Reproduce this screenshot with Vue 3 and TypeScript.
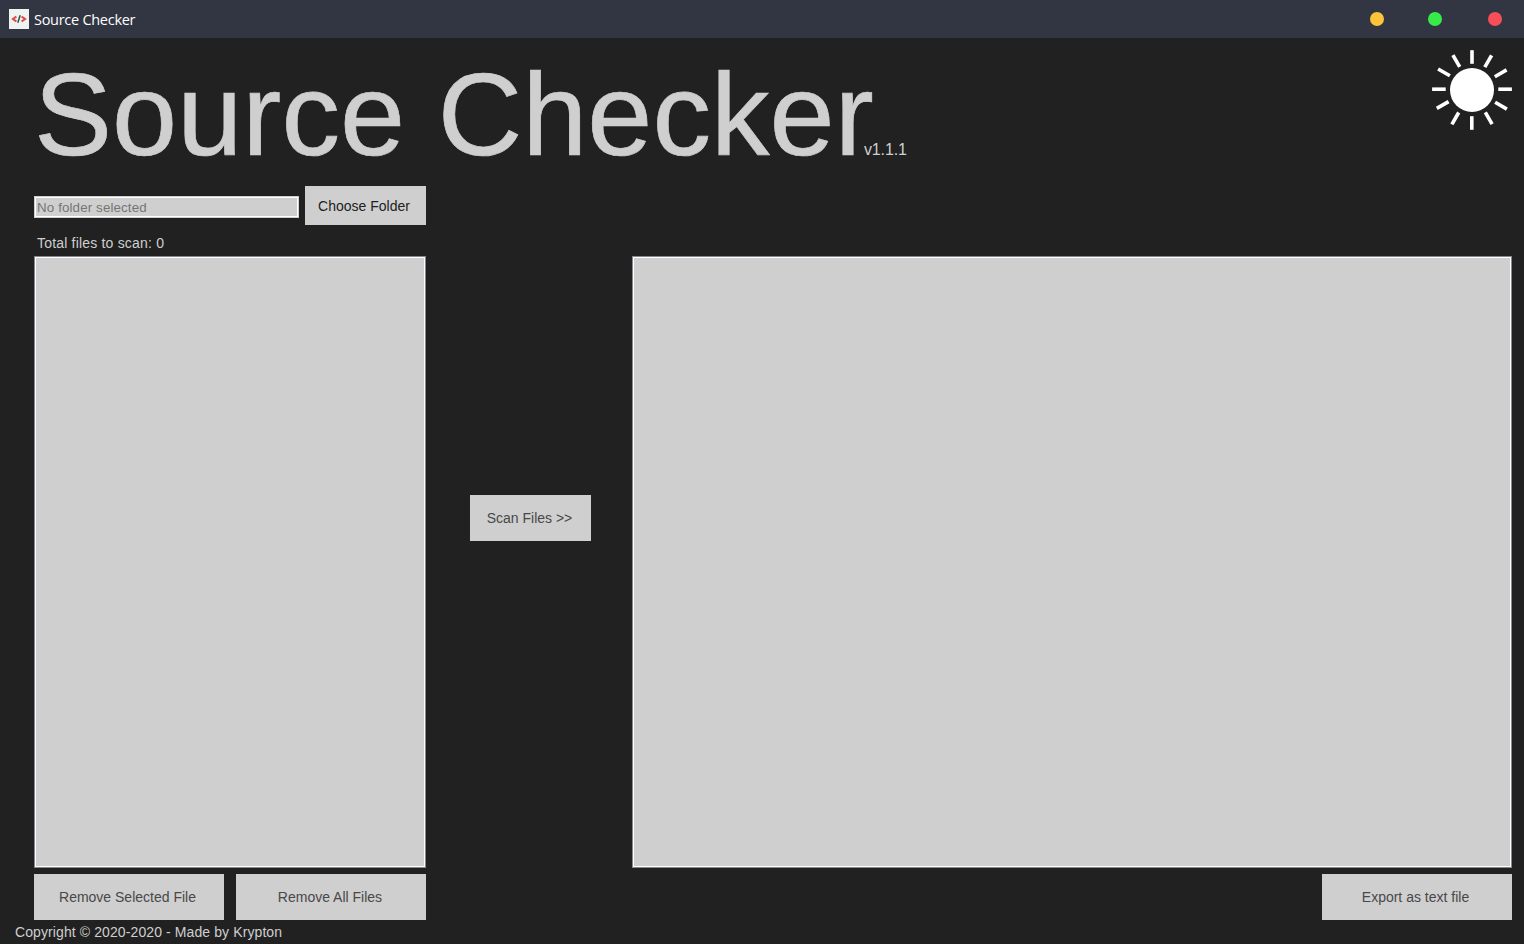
<script setup lang="ts">
import { ref } from 'vue'

interface Ray {
  angle: number
  x: number
  y: number
}

const folder = ref<string>('')
const totalFiles = ref<number>(0)

// Centre of each ray relative to the sun's disc.
const rays: Ray[] = [
  { angle: 0, x: 0, y: -33 },
  { angle: 30, x: 16.2, y: -28.8 },
  { angle: 60, x: 28.7, y: -16.7 },
  { angle: 90, x: 33.1, y: -0.8 },
  { angle: 120, x: 29, y: 15.7 },
  { angle: 150, x: 16.7, y: 28.3 },
  { angle: 180, x: -0.2, y: 33 },
  { angle: 210, x: -16.7, y: 28.4 },
  { angle: 240, x: -29.3, y: 15 },
  { angle: 270, x: -33.1, y: -0.8 },
  { angle: 300, x: -28, y: -17.6 },
  { angle: 330, x: -15.7, y: -29 },
]
</script>

<template>
  <div class="window">
    <header class="titlebar">
      <svg class="logo" width="20" height="20" viewBox="0 0 20 20">
        <rect width="20" height="20" fill="#eef2f1" />
        <path d="M7.4 7.5 4 10l3.4 2.5M12.6 7.5 16 10l-3.4 2.5" fill="none" stroke="#dc4a48" stroke-width="2.1" />
        <path d="M11.2 6.3 8.8 13.7" stroke="#344e56" stroke-width="1.5" />
      </svg>
      <span class="caption">Source Checker</span>
      <nav class="controls">
        <i class="dot minimize"></i>
        <i class="dot maximize"></i>
        <i class="dot close"></i>
      </nav>
    </header>

    <main class="content">
      <section class="masthead">
        <h1>Source Checker</h1>
        <span class="version">v1.1.1</span>
        <svg class="sun" width="80" height="80" viewBox="-40 -40 80 80">
          <circle cx="0" cy="0" r="22" fill="#fff" />
          <rect
            v-for="ray in rays"
            :key="ray.angle"
            x="-1.8"
            y="-6.8"
            width="3.6"
            height="13.6"
            fill="#fff"
            :transform="`translate(${ray.x} ${ray.y}) rotate(${ray.angle})`"
          />
        </svg>
      </section>

      <section class="picker">
        <input v-model="folder" class="path" type="text" placeholder="No folder selected" readonly />
        <button class="choose">Choose Folder</button>
      </section>
      <p class="total">Total files to scan: {{ totalFiles }}</p>

      <section class="panels">
        <div class="list"></div>
        <button class="scan">Scan Files &gt;&gt;</button>
        <div class="list"></div>
      </section>

      <section class="actions">
        <button class="remove">Remove Selected File</button>
        <button class="remove-all">Remove All Files</button>
        <button class="export">Export as text file</button>
      </section>
      <footer>Copyright © 2020-2020 - Made by Krypton</footer>
    </main>
  </div>
</template>

<style>
html,
body {
  background: #212121;
  overflow: hidden;
}
</style>

<style scoped>
.window {
  box-sizing: border-box;
  width: 1524px;
  height: 944px;
  overflow: hidden;
  background: #212121;
  color: #cfcfcf;
  font: 14px/16px 'Liberation Sans', Arial, sans-serif;
}
.titlebar {
  display: flex;
  align-items: center;
  box-sizing: border-box;
  height: 38px;
  padding: 0 22px 0 9px;
  background: #313642;
}
.logo {
  display: block;
}
.caption {
  margin: 1px 0 0 5px;
  color: #fff;
  font: 14.5px/20px 'Open Sans', 'Noto Sans', sans-serif;
  letter-spacing: -0.28px;
  white-space: nowrap;
}
.controls {
  display: flex;
  margin-left: auto;
}
.dot {
  width: 14px;
  height: 14px;
  border-radius: 50%;
}
.minimize {
  background: #fcc438;
}
.maximize {
  margin-left: 44px;
  background: #38ea49;
}
.close {
  margin-left: 46px;
  background: #f84e57;
}
.content {
  padding: 0 12px 0 34px;
}
.masthead {
  display: flex;
  height: 148px;
}
h1 {
  width: 839px;
  margin: 10px 0 0;
  font-size: 117px;
  font-weight: 400;
  line-height: 134px;
  letter-spacing: 0.06px;
  white-space: nowrap;
  -webkit-text-stroke: 0.7px #cfcfcf;
}
.version {
  margin: 103px 0 0 -9px;
  font-size: 16px;
  line-height: 18px;
  letter-spacing: -0.15px;
}
.sun {
  margin: 12px 0 0 auto;
}
.picker {
  display: flex;
  align-items: center;
  height: 39px;
}
.path {
  box-sizing: border-box;
  width: 265px;
  height: 22px;
  margin: 3px 6px 0 0;
  padding: 1px 2px 0;
  border: 1px solid #cfcfcf;
  outline: 1px solid #fff;
  outline-offset: -2px;
  border-radius: 0;
  background: #cfcfcf;
  color: #6d6d6d;
  font: 13.33px/16px 'Liberation Sans', Arial, sans-serif;
  letter-spacing: 0.13px;
}
.path::placeholder {
  color: #757575;
  opacity: 1;
}
button {
  flex: none;
  padding: 0;
  border: 0;
  background: #cfcfcf;
  color: #484848;
  font: 14px/16px 'Liberation Sans', Arial, sans-serif;
  text-align: center;
}
.choose {
  width: 121px;
  height: 39px;
  padding: 0 3px 0 0;
  color: #212121;
}
.total {
  margin: 0;
  padding: 10px 0 5px 3px;
  letter-spacing: 0.19px;
}
.panels {
  display: grid;
  grid-template-columns: 392px 44px 121px 41px 880px;
  height: 612px;
}
.list {
  box-sizing: border-box;
  border: 1px solid #828790;
  background: #cfcfcf;
  box-shadow: inset 0 0 0 1px #fff;
}
.list:last-child {
  grid-column: 5;
}
.scan {
  grid-column: 3;
  align-self: start;
  height: 46px;
  margin-top: 239px;
  padding-right: 2px;
}
.actions {
  display: flex;
  height: 46px;
  margin-top: 6px;
}
.actions button {
  width: 190px;
}
.actions .remove {
  padding-right: 3px;
}
.actions .remove-all {
  margin-left: 12px;
  padding-right: 2px;
}
.actions .export {
  margin-left: auto;
  padding-right: 3px;
}
footer {
  margin: 4px 0 0 -19px;
  letter-spacing: 0.1px;
}
</style>
